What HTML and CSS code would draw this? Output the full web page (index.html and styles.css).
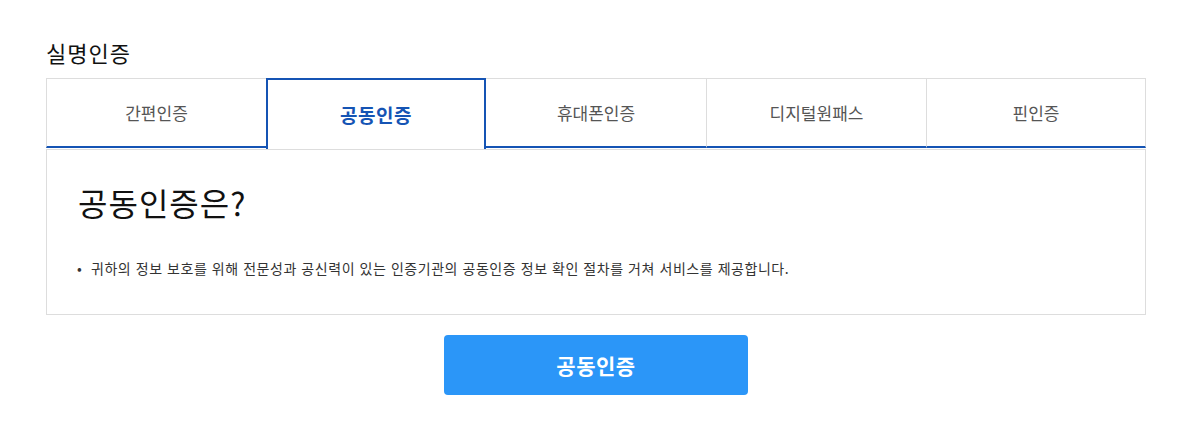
FILE: index.html
```html
<!DOCTYPE html>
<html lang="ko">
<head>
<meta charset="utf-8">
<title>실명인증</title>
<link rel="stylesheet" href="styles.css">
</head>
<body>
<div class="wrap">
  <h2 class="title">실명인증</h2>
  <ul class="tabs">
    <li class="tab">간편인증</li>
    <li class="tab active">공동인증</li>
    <li class="tab">휴대폰인증</li>
    <li class="tab">디지털원패스</li>
    <li class="tab">핀인증</li>
  </ul>
  <div class="panel">
    <h3 class="panel-title">공동인증은?</h3>
    <ul class="bullets">
      <li>귀하의 정보 보호를 위해 전문성과 공신력이 있는 인증기관의 공동인증 정보 확인 절차를 거쳐 서비스를 제공합니다.</li>
    </ul>
  </div>
  <div class="actions">
    <button class="btn" type="button">공동인증</button>
  </div>
</div>
</body>
</html>
```

FILE: styles.css
```css
* { box-sizing: border-box; }
html, body { margin: 0; padding: 0; background: #fff; }
body {
  font-family: "Noto Sans CJK KR", "Noto Sans", sans-serif;
  color: #222;
}
.wrap {
  width: 1100px;
  margin-left: 46px;
  padding-top: 36px;
}
.title {
  margin: 0 0 10px 0;
  font-size: 22px;
  font-weight: 400;
  letter-spacing: 1px;
  line-height: 32px;
  color: #111;
}
.tabs {
  list-style: none;
  margin: 0;
  padding: 0;
  display: flex;
  height: 71px;
  align-items: flex-start;
}
.tab {
  flex: 0 0 220px;
  height: 70px;
  display: flex;
  align-items: center;
  justify-content: center;
  font-size: 17px;
  color: #555;
  border-top: 1px solid #ddd;
  border-left: 1px solid #ddd;
  border-bottom: 2px solid #1554b4;
}
.tab:last-child { border-right: 1px solid #ddd; }
.tab.active {
  height: 71px;
  border: 2px solid #1554b4;
  border-bottom: 0;
  color: #1554b4;
  font-weight: 700;
  font-size: 19px;
  letter-spacing: 0.5px;
  padding-bottom: 1px;
}
.tab.active + .tab { border-left: 0; }
.panel {
  height: 166px;
  border: 1px solid #ddd;
  padding: 30px 31px 0 31px;
}
.panel-title {
  margin: 0;
  font-size: 32px;
  font-weight: 400;
  letter-spacing: 1px;
  line-height: 44px;
  color: #111;
}
.bullets {
  list-style: none;
  margin: 34px 0 0 0;
  padding: 0;
  font-size: 14px;
  letter-spacing: 0.55px;
  line-height: 20px;
  color: #333;
}
.bullets li {
  position: relative;
  padding-left: 13px;
}
.bullets li::before {
  content: "•";
  position: absolute;
  left: -1px;
  top: 0;
}
.actions {
  display: flex;
  justify-content: center;
  padding-top: 20px;
}
.btn {
  width: 304px;
  height: 60px;
  border: 0;
  border-radius: 4px;
  background: #2b96f8;
  color: #fff;
  font-family: "Noto Sans CJK KR", "Noto Sans", sans-serif;
  font-size: 21px;
  font-weight: 700;
  letter-spacing: 0.5px;
  cursor: pointer;
}
```
